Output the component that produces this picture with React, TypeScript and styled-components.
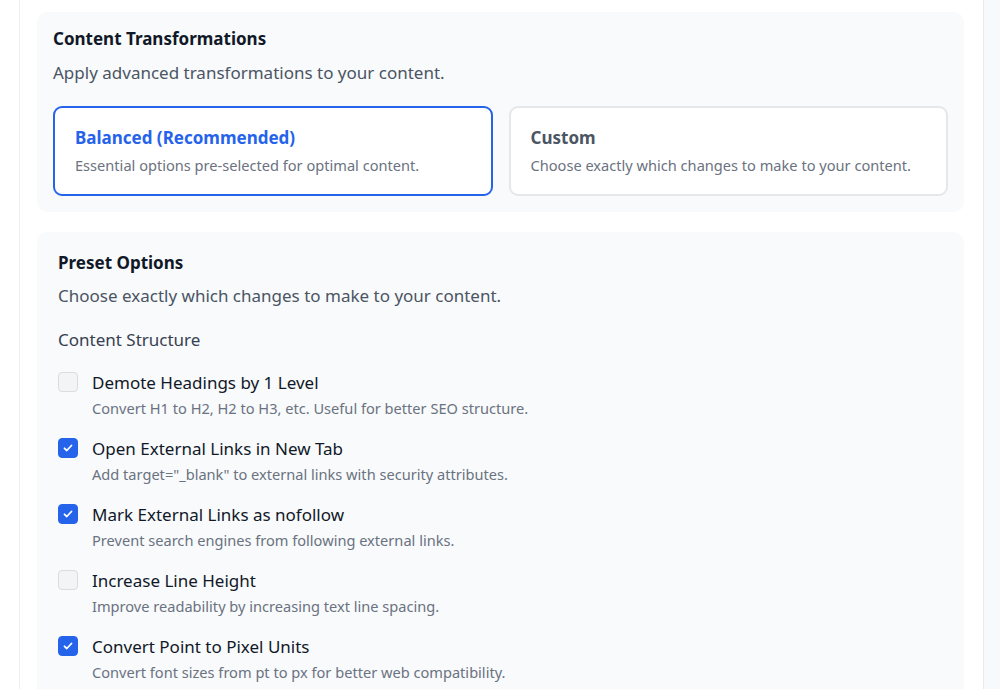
import * as React from "react";
import styled, { createGlobalStyle } from "styled-components";

const GlobalStyles = createGlobalStyle`
  html, body, #root {
    height: 100%;
    width: 100%;
  }
  *, *:before, *:after {
    box-sizing: border-box;
    margin: 0;
    padding: 0;
  }
  body {
    background: #fff;
    color: #111827;
    font-family: "Noto Sans", "Open Sans", sans-serif;
    overflow: hidden;
  }
`;

const Shell = styled.div`
  display: flex;
  height: 100%;
  padding-left: 19px;
`;

const Main = styled.main`
  width: 965px;
  flex-shrink: 0;
  border-left: 1px solid #eceef1;
  border-right: 1px solid #e8eaed;
  padding: 12px 19px 0 17px;
  display: flex;
  flex-direction: column;
  gap: 20px;
`;

const Aside = styled.aside`
  flex: 1;
  background: #f7f9fa;
`;

const Panel = styled.section<{ $roomy?: boolean }>`
  background: #f8fafc;
  border-radius: 10px;
  padding: ${(p) => (p.$roomy ? "20px 21px 24px" : "16px")};
`;

const Title = styled.h2`
  font-size: 17px;
  line-height: 22px;
  font-weight: 700;
  color: #111827;
`;

const Lead = styled.p<{ $space: number }>`
  margin-top: ${(p) => p.$space}px;
  font-size: 17px;
  line-height: 24px;
  color: #4b5563;
`;

const ModeGrid = styled.div`
  margin-top: 21px;
  display: grid;
  grid-template-columns: 1fr 1fr;
  gap: 16px;
`;

const ModeCard = styled.button<{ $active?: boolean }>`
  all: unset;
  box-sizing: border-box;
  display: flex;
  flex-direction: column;
  justify-content: flex-start;
  height: 90px;
  padding: 19px 20px 0;
  background: #fff;
  border: 2px solid ${(p) => (p.$active ? "#2563eb" : "#e5e7eb")};
  border-radius: 9px;
  cursor: pointer;
  font-family: "Noto Sans", "Open Sans", sans-serif;

  strong {
    display: block;
    font-size: 17px;
    line-height: 22px;
    font-weight: 700;
    color: ${(p) => (p.$active ? "#2563eb" : "#4b5563")};
  }
  span {
    display: block;
    margin-top: 6px;
    font-size: 14.6px;
    line-height: 20px;
    color: #6b7280;
  }
`;

const GroupLabel = styled.h3`
  margin-top: 20px;
  font-size: 17px;
  line-height: 24px;
  font-weight: 400;
  color: #374151;
`;

const OptionList = styled.ul`
  list-style: none;
  margin-top: 19px;
  display: flex;
  flex-direction: column;
  gap: 19px;
`;

const Option = styled.li`
  display: flex;
  gap: 14px;
  align-items: flex-start;
  cursor: pointer;
`;

const Box = styled.span<{ $on: boolean }>`
  width: 20px;
  height: 20px;
  margin-top: 1px;
  flex-shrink: 0;
  border-radius: 4px;
  display: grid;
  place-items: center;
  background: ${(p) => (p.$on ? "#2563eb" : "#f3f4f6")};
  border: 1px solid ${(p) => (p.$on ? "#2563eb" : "#d9dce1")};
`;

const OptionText = styled.div`
  strong {
    display: block;
    font-size: 17px;
    line-height: 24px;
    font-weight: 400;
    color: #111827;
  }
  span {
    display: block;
    margin-top: 3px;
    font-size: 14.6px;
    line-height: 20px;
    color: #6b7280;
  }
`;

const options = [
  {
    label: "Demote Headings by 1 Level",
    hint: "Convert H1 to H2, H2 to H3, etc. Useful for better SEO structure.",
    on: false,
  },
  {
    label: "Open External Links in New Tab",
    hint: 'Add target="_blank" to external links with security attributes.',
    on: true,
  },
  {
    label: "Mark External Links as nofollow",
    hint: "Prevent search engines from following external links.",
    on: true,
  },
  {
    label: "Increase Line Height",
    hint: "Improve readability by increasing text line spacing.",
    on: false,
  },
  {
    label: "Convert Point to Pixel Units",
    hint: "Convert font sizes from pt to px for better web compatibility.",
    on: true,
  },
];

const Check = () => (
  <svg width="12" height="12" viewBox="0 0 12 12" fill="none">
    <path
      d="M2.5 6.3l2.3 2.2 4.7-5"
      stroke="#fff"
      strokeWidth="1.8"
      strokeLinecap="round"
      strokeLinejoin="round"
    />
  </svg>
);

const App = () => {
  const [mode, setMode] = React.useState("balanced");
  const [state, setState] = React.useState(options.map((o) => o.on));

  return (
    <>
      <GlobalStyles />
      <Shell>
        <Main>
          <Panel>
            <Title>Content Transformations</Title>
            <Lead $space={11}>Apply advanced transformations to your content.</Lead>
            <ModeGrid>
              <ModeCard $active={mode === "balanced"} onClick={() => setMode("balanced")}>
                <strong>Balanced (Recommended)</strong>
                <span>Essential options pre-selected for optimal content.</span>
              </ModeCard>
              <ModeCard $active={mode === "custom"} onClick={() => setMode("custom")}>
                <strong>Custom</strong>
                <span>Choose exactly which changes to make to your content.</span>
              </ModeCard>
            </ModeGrid>
          </Panel>

          <Panel $roomy>
            <Title>Preset Options</Title>
            <Lead $space={10}>Choose exactly which changes to make to your content.</Lead>
            <GroupLabel>Content Structure</GroupLabel>
            <OptionList>
              {options.map((o, i) => (
                <Option
                  key={o.label}
                  onClick={() => setState((s) => s.map((v, j) => (j === i ? !v : v)))}
                >
                  <Box $on={state[i]}>{state[i] && <Check />}</Box>
                  <OptionText>
                    <strong>{o.label}</strong>
                    <span>{o.hint}</span>
                  </OptionText>
                </Option>
              ))}
            </OptionList>
          </Panel>
        </Main>
        <Aside />
      </Shell>
    </>
  );
};

export default App;
